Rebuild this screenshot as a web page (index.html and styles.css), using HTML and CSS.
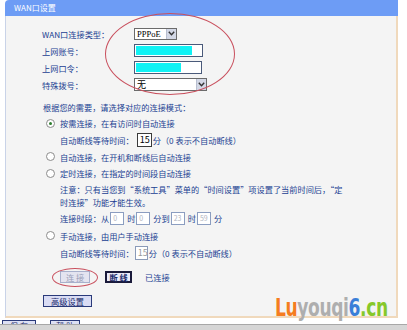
FILE: index.html
```html
<!DOCTYPE html>
<html lang="zh-CN">
<head>
<meta charset="utf-8">
<title>WAN口设置</title>
<link rel="stylesheet" href="styles.css">
</head>
<body>
<div class="panel">
  <div class="panel-head">WAN口设置</div>
  <div class="panel-body">
    <div class="form">
      <div class="frow"><span class="lbl">WAN口连接类型：</span><span class="sel sel-type"><span class="sel-text">PPPoE</span><span class="sel-btn"><svg width="7" height="5" viewBox="0 0 7 5"><path d="M0.8 0.8 L3.5 3.8 L6.2 0.8" fill="none" stroke="#333" stroke-width="1.4"/></svg></span></span></div>
      <div class="frow"><span class="lbl">上网账号：</span><span class="inp inp-user"><span class="fill fill-user"></span></span></div>
      <div class="frow"><span class="lbl">上网口令：</span><span class="inp inp-pass"><span class="fill fill-pass"></span></span></div>
      <div class="frow"><span class="lbl">特殊拨号：</span><span class="sel sel-dial"><span class="sel-text">无</span><span class="sel-btn"><svg width="7" height="5" viewBox="0 0 7 5"><path d="M0.8 0.8 L3.5 3.8 L6.2 0.8" fill="none" stroke="#333" stroke-width="1.4"/></svg></span></span></div>
    </div>
    <div class="modes">
      <div class="line intro">根据您的需要，请选择对应的连接模式：</div>
      <div class="line opt"><span class="radio on"></span>按需连接，在有访问时自动连接</div>
      <div class="line sub h17">自动断线等待时间：<span class="box">15</span>分（0 表示不自动断线）</div>
      <div class="line opt h17"><span class="radio"></span>自动连接，在开机和断线后自动连接</div>
      <div class="line opt"><span class="radio"></span>定时连接，在指定的时间段自动连接</div>
      <div class="note">注意：只有当您到“系统工具”菜单的“时间设置”项设置了当前时间后，“定<br>时连接”功能才能生效。</div>
      <div class="line sub h18">连接时段：从<span class="tbox">0</span>时<span class="tbox">0</span>分到<span class="tbox">23</span>时<span class="tbox">59</span>分</div>
      <div class="line opt h17"><span class="radio"></span>手动连接，由用户手动连接</div>
      <div class="line sub h18">自动断线等待时间：<span class="box dis">15</span>分（0 表示不自动断线）</div>
    </div>
    <div class="btns">
      <span class="btn btn-conn">连 接</span>
      <span class="btn btn-disc">断 线</span>
      <span class="state">已连接</span>
    </div>
    <div class="adv"><span class="btn btn-adv">高级设置</span></div>
  </div>
</div>
<div class="foot"><span class="fbtn fbtn1">保 存</span><span class="fbtn fbtn2">帮 助</span></div>
<div class="status"></div>
<div class="ring ring1"></div>
<div class="ring ring2"></div>
<div class="mark"><span class="m-o">Lu</span><span class="m-g">youqi</span><span class="m-b">6</span><span class="m-n">.cn</span></div>
</body>
</html>
```
FILE: styles.css
```css
* { box-sizing: border-box; margin: 0; padding: 0; }
html, body { width: 407px; height: 330px; overflow: hidden; background: #fff; }
body {
  position: relative;
  font-family: "Noto Sans CJK SC", "Noto Sans", sans-serif;
  font-size: 8.2px;
  color: #223f92;
}
.panel { margin-left: 5px; width: 393px; height: 318px; display: flex; flex-direction: column; }
.panel-head {
  height: 16px;
  background: #6d9cf5;
  border-top-left-radius: 4px;
  color: #fff;
  font-size: 8px;
  line-height: 16px;
  padding-left: 9px;
}
.panel-body {
  flex: 1;
  background: #f4f4f4;
  border-left: 1px solid #c9d3e8;
  border-right: 2px solid #f0d9bc;
  border-bottom: 2px solid #f0d9bc;
}
.form { padding: 9px 0 0 36px; }
.frow { display: flex; align-items: center; height: 17px; }
.lbl { width: 92px; }
.sel {
  display: flex; align-items: stretch;
  background: #fff;
  border: 1px solid #6b6b6b;
  color: #000;
}
.sel-type { width: 43px; height: 12px; }
.sel-dial { width: 73px; height: 13px; }
.sel-text { flex: 1; padding-left: 2px; font-family: "Liberation Serif", serif; font-size: 8.5px; line-height: 10px; }
.sel-dial .sel-text { font-family: "Noto Sans CJK SC", sans-serif; font-size: 9px; line-height: 11px; }
.sel-btn {
  width: 10px;
  background: #d3d8e6;
  border-left: 1px solid #b8bfd0;
  display: flex; align-items: center; justify-content: center;
}
.inp { display: flex; align-items: center; height: 13px; background: #fff; border: 1px solid #4a5a7a; padding-left: 1px; }
.inp-user { width: 69px; }
.inp-pass { width: 68px; }
.fill { height: 9px; background: #10f2f4; }
.fill-user { width: 56px; }
.fill-pass { width: 45px; }

.modes { display: flex; flex-direction: column; }
.line { display: flex; align-items: center; height: 16px; white-space: nowrap; }
.h17 { height: 17px; }
.h18 { height: 18px; }
.intro { margin-top: 6px; padding-left: 37px; }
.opt { padding-left: 40px; }
.sub { padding-left: 54px; }
.radio {
  width: 9px; height: 9px; margin-right: 5px;
  border: 1px solid #8c8c8c; border-radius: 50%;
  background: #fff;
  display: flex; align-items: center; justify-content: center;
}
.radio.on::after { content: ""; width: 3px; height: 3px; border-radius: 50%; background: #2d7d2d; }
.box {
  width: 15px; height: 14px; margin: 0 1px 0 3px;
  border: 1px solid #3a3a3a; background: #fff; color: #000;
  font-size: 9px; line-height: 12px; padding-left: 2px;
}
.box.dis { width: 13px; margin-left: 1px; border-color: #8a9ab8; color: #9a9a9a; }
.note { padding: 2px 0 0 54px; height: 28px; line-height: 13px; white-space: nowrap; }
.tbox {
  width: 14px; height: 13px; margin: 0 3px 0 1px;
  border: 1px solid #8b9dc0; background: #fff; color: #b0b4c0;
  font-size: 7px; line-height: 11px; padding-left: 2px;
}
.btns { display: flex; align-items: center; height: 12px; margin-top: 9px; padding-left: 54px; }
.btn { display: flex; align-items: center; justify-content: center; height: 12px; }
.btn-conn { width: 30px; background: #e4e4f0; border: 1px solid #a8b0cc; color: #9aa0b8; }
.btn-disc { width: 27px; margin-left: 15px; background: #eaeaf8; border: 2px solid #1a1a3a; color: #1a2a6a; font-weight: bold; }
.state { margin-left: 13px; }
.adv { display: flex; margin-top: 12px; padding-left: 37px; }
.btn-adv { width: 49px; background: #d9dcf4; border: 1px solid #2a3a7a; color: #1a2a6a; }

.foot { display: flex; height: 6px; overflow: hidden; padding-top: 2px; }
.fbtn { display: block; height: 12px; border: 1px solid #2a3a7a; background: #dde0f4; color: #1a2a6a; text-align: center; font-size: 8px; line-height: 9px; }
.fbtn1 { width: 34px; margin-left: 2px; }
.fbtn2 { width: 30px; margin-left: 14px; }
.status { height: 6px; background: #d6d6d6; border-top: 1px solid #a8a8a8; }

.ring { position: absolute; border: 1px solid #c9505e; border-radius: 50%; }
.ring1 { left: 105px; top: 13px; width: 130px; height: 82px; }
.ring2 { left: 52px; top: 268px; width: 46px; height: 19px; }

.mark {
  position: absolute; left: 275px; top: 295px;
  font-family: "DejaVu Sans Condensed", "DejaVu Sans", sans-serif;
  font-weight: bold; font-size: 25px; line-height: 25px;
  letter-spacing: -0.5px;
  transform: scaleX(0.76); transform-origin: left top;
  white-space: nowrap;
}
.m-o { color: #f57c20; }
.m-g { color: #aeaeae; }
.m-b { color: #3a7fd8; }
.m-n { color: #86c82a; }
```
